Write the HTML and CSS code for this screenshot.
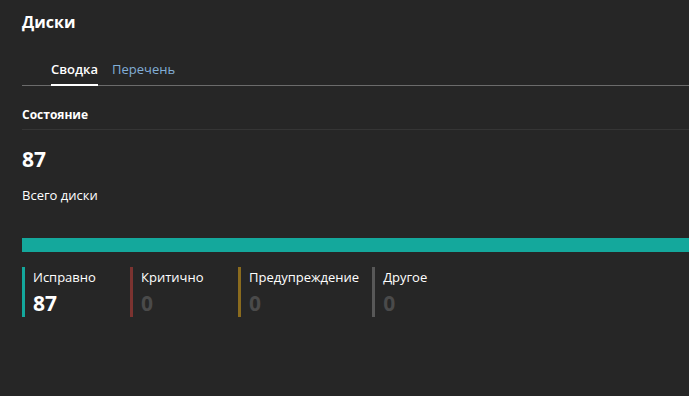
FILE: index.html
```html
<!DOCTYPE html>
<html lang="ru">
<head>
  <meta charset="UTF-8" />
  <title>Диски</title>
  <link rel="stylesheet" href="styles.css">
</head>
<body>
  <h1 class="page-title">Диски</h1>

  <div class="tabs">
    <span class="tab active">Сводка</span>
    <span class="tab">Перечень</span>
  </div>

  <h2 class="section-title">Состояние</h2>

  <div class="total">87</div>
  <div class="total-label">Всего диски</div>

  <div class="bar">
    <div class="bar-fill ok" style="width: 100%"></div>
  </div>

  <div class="legend">
    <div class="legend-item ok">
      <div class="legend-label">Исправно</div>
      <div class="legend-value">87</div>
    </div>
    <div class="legend-item critical">
      <div class="legend-label">Критично</div>
      <div class="legend-value empty">0</div>
    </div>
    <div class="legend-item warning">
      <div class="legend-label">Предупреждение</div>
      <div class="legend-value empty">0</div>
    </div>
    <div class="legend-item other">
      <div class="legend-label">Другое</div>
      <div class="legend-value empty">0</div>
    </div>
  </div>
</body>
</html>
```

FILE: styles.css
```css
body {
  margin: 0;
  padding-left: 22px;
  background: #262626;
  color: #fff;
  font-family: "Open Sans", "Noto Sans", sans-serif;
  font-size: 13px;
}

.page-title {
  margin: 0;
  padding-top: 12px;
  font-size: 16px;
  line-height: 20px;
  font-weight: 700;
}

.tabs {
  display: flex;
  gap: 14px;
  margin-top: 28px;
  padding-left: 29px;
  border-bottom: 1px solid #6b6b6b;
}

.tab {
  line-height: 18px;
  padding-bottom: 6px;
  margin-bottom: -1px;
  border-bottom: 2px solid transparent;
  color: #82aed6;
}

.tab.active {
  color: #fff;
  font-weight: 600;
  border-bottom-color: #fff;
}

.section-title {
  margin: 21px 0 0;
  padding-bottom: 6px;
  font-size: 12px;
  line-height: 16px;
  font-weight: 700;
  border-bottom: 1px solid #353535;
}

.total {
  margin-top: 17px;
  font-size: 21px;
  line-height: 24px;
  font-weight: 700;
}

.total-label {
  margin-top: 15px;
  line-height: 18px;
}

.bar {
  display: flex;
  height: 14px;
  margin-top: 34px;
}

.bar-fill.ok {
  background: #14a89c;
}

.legend {
  display: flex;
  margin-top: 15px;
}

.legend-item {
  min-width: 108px;
  box-sizing: border-box;
  height: 50px;
  padding: 1px 13px 0 8px;
  border-left: 3px solid #5a5a5a;
}

.legend-item.ok { border-color: #14a89c; }
.legend-item.critical { border-color: #7c3330; }
.legend-item.warning { border-color: #8a6b1e; }
.legend-item.other { border-color: #585858; }

.legend-label {
  line-height: 18px;
}

.legend-value {
  margin-top: 5px;
  font-size: 21px;
  line-height: 24px;
  font-weight: 700;
}

.legend-value.empty {
  color: #4a4a4a;
}
```
